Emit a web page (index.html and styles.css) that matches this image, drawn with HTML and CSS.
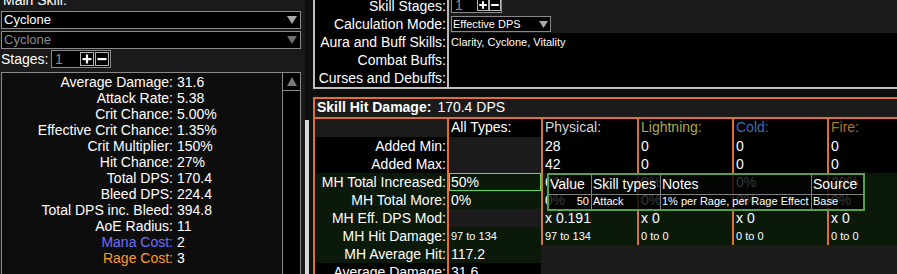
FILE: index.html
```html
<!DOCTYPE html>
<html>
<head>
<meta charset="utf-8">
<link rel="stylesheet" href="styles.css">
</head>
<body>
<div class="app">
  <aside class="side">
    <div class="main-skill">Main Skill:</div>
    <div class="dropdown"><span>Cyclone</span><svg class="arrow" width="10" height="8" viewBox="0 0 10 8"><polygon points="0,0 10,0 5,8" fill="#a8a8a8"/></svg></div>
    <div class="dropdown disabled"><span>Cyclone</span><svg class="arrow" width="10" height="8" viewBox="0 0 10 8"><polygon points="0,0 10,0 5,8" fill="#6e6e6e"/></svg></div>
    <div class="stages">
      <span class="stages-label">Stages:</span>
      <div class="spin">
        <span class="spin-val">1</span>
        <span class="spin-btns">
          <span class="btn"><svg width="12" height="12" viewBox="0 0 12 12"><rect x="1.5" y="5" width="9" height="2.2" fill="#fff"/><rect x="4.9" y="1.5" width="2.2" height="9" fill="#fff"/></svg></span>
          <span class="btn"><svg width="12" height="12" viewBox="0 0 12 12"><rect x="1.5" y="5" width="9" height="2.2" fill="#fff"/></svg></span>
        </span>
      </div>
    </div>
    <div class="output">
      <div class="out-list">
        <span class="ol">Average Damage:</span><span>31.6</span>
        <span class="ol">Attack Rate:</span><span>5.38</span>
        <span class="ol">Crit Chance:</span><span>5.00%</span>
        <span class="ol">Effective Crit Chance:</span><span>1.35%</span>
        <span class="ol">Crit Multiplier:</span><span>150%</span>
        <span class="ol">Hit Chance:</span><span>27%</span>
        <span class="ol">Total DPS:</span><span>170.4</span>
        <span class="ol">Bleed DPS:</span><span>224.4</span>
        <span class="ol">Total DPS inc. Bleed:</span><span>394.8</span>
        <span class="ol">AoE Radius:</span><span>11</span>
        <span class="ol mana">Mana Cost:</span><span>2</span>
        <span class="ol rage">Rage Cost:</span><span>3</span>
      </div>
      <div class="scrollbar">
        <div class="scroll-up"><svg width="10" height="9" viewBox="0 0 10 9"><polygon points="5,0 10,9 0,9" fill="#7a7a7a"/></svg></div>
      </div>
    </div>
  </aside>

  <main class="main">
    <div class="splitter"></div>
    <div class="sections">
      <section class="sec-opts">
        <div class="opt-row">
          <div class="opt-label">Skill Stages:</div>
          <div class="opt-value dark">
            <div class="spin spin-sm">
              <span class="spin-val">1</span>
              <span class="spin-btns">
                <span class="btn"><svg width="10" height="10" viewBox="0 0 10 10"><rect x="1.2" y="4" width="7.6" height="2" fill="#fff"/><rect x="4" y="1.2" width="2" height="7.6" fill="#fff"/></svg></span>
                <span class="btn"><svg width="10" height="10" viewBox="0 0 10 10"><rect x="1.2" y="4" width="7.6" height="2" fill="#fff"/></svg></span>
              </span>
            </div>
          </div>
        </div>
        <div class="opt-row">
          <div class="opt-label">Calculation Mode:</div>
          <div class="opt-value dark">
            <div class="dropdown dropdown-sm"><span>Effective DPS</span><svg class="arrow" width="9" height="7" viewBox="0 0 9 7"><polygon points="0,0 9,0 4.5,7" fill="#a8a8a8"/></svg></div>
          </div>
        </div>
        <div class="opt-row">
          <div class="opt-label">Aura and Buff Skills:</div>
          <div class="opt-value sm">Clarity, Cyclone, Vitality</div>
        </div>
        <div class="opt-row">
          <div class="opt-label">Combat Buffs:</div>
          <div class="opt-value"></div>
        </div>
        <div class="opt-row">
          <div class="opt-label">Curses and Debuffs:</div>
          <div class="opt-value"></div>
        </div>
      </section>

      <section class="sec-off">
        <div class="off-head"><b>Skill Hit Damage:</b><span class="head-val">170.4 DPS</span></div>

        <div class="trow head">
          <div class="cl empty"></div>
          <div class="c w-all">All Types:</div>
          <div class="c w-phys phys">Physical:</div>
          <div class="c w-el light">Lightning:</div>
          <div class="c w-el cold">Cold:</div>
          <div class="c w-el fire">Fire:</div>
        </div>
        <div class="trow">
          <div class="cl">Added Min:</div>
          <div class="c w-all empty"></div>
          <div class="c w-phys">28</div>
          <div class="c w-el">0</div>
          <div class="c w-el">0</div>
          <div class="c w-el">0</div>
        </div>
        <div class="trow">
          <div class="cl">Added Max:</div>
          <div class="c w-all empty"></div>
          <div class="c w-phys">42</div>
          <div class="c w-el">0</div>
          <div class="c w-el">0</div>
          <div class="c w-el">0</div>
        </div>
        <div class="trow green">
          <div class="cl">MH Total Increased:</div>
          <div class="c w-all hl">50%</div>
          <div class="c w-phys">61%</div>
          <div class="c w-el">0%</div>
          <div class="c w-el">0%</div>
          <div class="c w-el">20%</div>
        </div>
        <div class="trow green">
          <div class="cl">MH Total More:</div>
          <div class="c w-all">0%</div>
          <div class="c w-phys">0%</div>
          <div class="c w-el">0%</div>
          <div class="c w-el">0%</div>
          <div class="c w-el">0%</div>
        </div>
        <div class="trow green">
          <div class="cl">MH Eff. DPS Mod:</div>
          <div class="c w-all empty"></div>
          <div class="c w-phys">x 0.191</div>
          <div class="c w-el">x 0</div>
          <div class="c w-el">x 0</div>
          <div class="c w-el">x 0</div>
        </div>
        <div class="trow green">
          <div class="cl">MH Hit Damage:</div>
          <div class="c w-all sm">97 to 134</div>
          <div class="c w-phys sm">97 to 134</div>
          <div class="c w-el sm">0 to 0</div>
          <div class="c w-el sm">0 to 0</div>
          <div class="c w-el sm">0 to 0</div>
        </div>
        <div class="trow green">
          <div class="cl">MH Average Hit:</div>
          <div class="c w-all">117.2</div>
        </div>
        <div class="trow">
          <div class="cl">Average Damage:</div>
          <div class="c w-all">31.6</div>
        </div>

        <div class="tip">
          <div class="tip-h">Value</div>
          <div class="tip-h">Skill types</div>
          <div class="tip-h">Notes</div>
          <div class="tip-h">Source</div>
          <div class="tip-d num">50</div>
          <div class="tip-d">Attack</div>
          <div class="tip-d">1% per Rage, per Rage Effect</div>
          <div class="tip-d">Base</div>
        </div>
      </section>
    </div>
  </main>
</div>
</body>
</html>
```
FILE: styles.css
```css
* { box-sizing: border-box; margin: 0; padding: 0; }
html, body {
  width: 897px;
  height: 274px;
  overflow: hidden;
  background: #0f0f0f;
}
body {
  font-family: "Liberation Sans", Arial, sans-serif;
  font-size: 14px;
  line-height: 16px;
  color: #ffffff;
}
.app { display: flex; height: 274px; }

/* ---------- left panel ---------- */
.side {
  width: 305px;
  flex: none;
  background: #1a1a1a;
  padding: 0 4px 0 1px;
  display: flex;
  flex-direction: column;
}
.main-skill { margin-top: -8px; height: 16px; padding-left: 2px; }
.dropdown {
  height: 18px;
  border: 1px solid #8a8a8a;
  background: #000;
  display: flex;
  align-items: center;
  justify-content: space-between;
  padding: 0 3px 0 2px;
  font-size: 13px;
  margin-top: 3px;
}
.dropdown + .dropdown { margin-top: 2px; }
.dropdown.disabled { color: #8c8c8c; }
.stages { margin-top: 1px; height: 18px; display: flex; align-items: center; }
.stages-label { width: 50px; }
.spin {
  width: 60px;
  height: 18px;
  border: 1px solid #8a8a8a;
  background: #000;
  display: flex;
  align-items: center;
  padding: 0 1px 0 3px;
}
.spin-val { color: #8c8c8c; flex: 1; }
.spin-btns { display: flex; gap: 1px; }
.btn {
  width: 14px;
  height: 14px;
  border: 1px solid #b4b4b4;
  background: #000;
  display: flex;
  align-items: center;
  justify-content: center;
}
.output {
  margin-top: 4px;
  flex: 1;
  border: 1px solid #8a8a8a;
  border-bottom: 0;
  background: #0d0d0d;
  display: flex;
}
.out-list {
  flex: 1;
  padding-top: 1px;
  display: grid;
  grid-template-columns: 171px auto;
  column-gap: 4px;
  align-content: start;
}
.ol { text-align: right; }
.mana { color: #7070ff; }
.rage { color: #ff9922; }
.scrollbar { width: 18px; border-left: 1px solid #8a8a8a; background: #000; }
.scroll-up {
  height: 18px;
  border-bottom: 1px solid #8a8a8a;
  display: flex;
  align-items: center;
  justify-content: center;
}

/* ---------- main area ---------- */
.main { flex: 1; display: flex; background: #0f0f0f; min-width: 0; }
.splitter { width: 4px; flex: none; margin: 120px 4px 0 0; background: #d8d8d8; }
.sections { width: 640px; flex: none; display: flex; flex-direction: column; gap: 8px; }

.sec-opts {
  margin-top: -5px;
  border: 2px solid #c0c0c0;
  border-right: 0;
}
.opt-row { display: flex; height: 18px; line-height: 18px; }
.opt-label { width: 132px; background: #000; text-align: right; padding-right: 1px; }
.opt-value { flex: 1; border-left: 2px solid #b8b8b8; background: #000; padding-left: 2px; }
.opt-value.dark { background: #1b1b1b; }
.sm { font-size: 11px; }
.spin-sm { width: 51px; height: 16px; padding: 0 0 0 3px; }
.spin-sm .btn { width: 12px; height: 12px; }
.spin-sm .spin-btns { gap: 0; }
.dropdown-sm {
  width: 100px;
  height: 16px;
  margin-top: 1px;
  font-size: 11px;
  padding: 0 2px 0 1px;
}

.sec-off {
  flex: 1;
  position: relative;
  border: 2px solid #e07030;
  border-right: 0;
  border-bottom: 0;
  background: #1b1b1b;
}
.off-head {
  height: 20px;
  border-bottom: 2px solid #e07030;
  padding-left: 2px;
  line-height: 16px;
}
.head-val { margin-left: 6px; }
.trow { display: flex; height: 18px; line-height: 18px; }
.trow.head { line-height: 16px; }
.cl { width: 132px; flex: none; text-align: right; padding-right: 1px; background: #000; }
.c { flex: none; border-left: 2px solid #e07030; padding-left: 2px; background: #000; white-space: nowrap; }
.w-all { width: 94px; }
.w-phys { width: 96px; }
.w-el { width: 95px; }
.cl.empty, .c.empty { background: #1b1b1b; }
.green .cl, .green .c { background: #0a190a; }
.green .c.empty { background: #1b1b1b; }
.phys { color: #d4d4d4; }
.light { color: #adaa47; }
.cold { color: #3f6db3; }
.fire { color: #b97123; }
.hl { box-shadow: inset 0 0 0 1px #60d860; }

.tip {
  position: absolute;
  left: 232px;
  top: 74px;
  width: 318px;
  height: 38px;
  border: 2px solid #58a050;
  background: rgba(0, 0, 0, 0.8);
  display: grid;
  grid-template-columns: 43px 69px 151px 1fr;
  grid-template-rows: 20px 14px;
}
.tip-h, .tip-d { border-right: 1px solid #808080; padding-left: 1px; white-space: nowrap; }
.tip-h:nth-child(4), .tip-d:nth-child(8) { border-right: 0; }
.tip-h { border-bottom: 1px solid #808080; line-height: 19px; font-size: 14px; }
.tip-d { font-size: 11px; line-height: 13px; }
.tip-d.num { text-align: right; padding-right: 2px; }
```
